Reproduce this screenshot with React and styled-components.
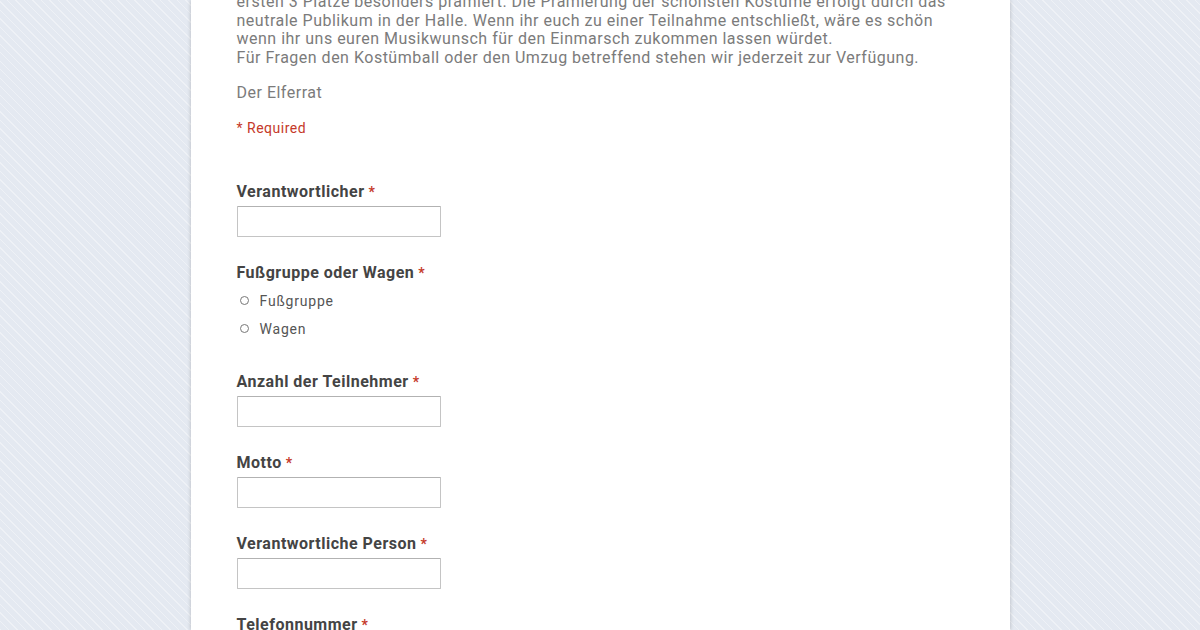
import React from "react";
import styled, { createGlobalStyle } from "styled-components";

const GlobalStyle = createGlobalStyle`
  html, body {
    margin: 0;
    padding: 0;
    height: 100%;
    overflow: hidden;
  }
  body {
    font-family: Roboto, "Liberation Sans", Arial, sans-serif;
    background-color: #e4e9f1;
    background-image: repeating-linear-gradient(
      45deg,
      rgba(255, 255, 255, 0.38) 0px,
      rgba(255, 255, 255, 0.38) 1px,
      transparent 1px,
      transparent 6px
    );
  }
`;

const Page = styled.div`
  height: 630px;
  display: flex;
  justify-content: center;
`;

const Card = styled.main`
  width: 819px;
  background: #fff;
  box-shadow: 0 0 4px rgba(0, 0, 0, 0.22);
  padding: 0 46px;
  box-sizing: border-box;
  overflow: hidden;
`;

const Description = styled.div`
  margin-top: -7px;
  color: #7b7b7b;
  font-size: 16px;
  line-height: 18.5px;
  letter-spacing: 0.5px;
  white-space: nowrap;
`;

const Signature = styled.p`
  margin: 17px 0 0;
  color: #7b7b7b;
  font-size: 16px;
  line-height: 18.5px;
  letter-spacing: 0.5px;
`;

const RequiredNote = styled.p`
  margin: 16px 0 0;
  color: #c53929;
  font-size: 14px;
  line-height: 18px;
  letter-spacing: 0.5px;
`;

const Fields = styled.div`
  margin-top: 45px;
  display: flex;
  flex-direction: column;
  gap: 26px;
`;

const Field = styled.div`
  display: flex;
  flex-direction: column;
  gap: 4px;
`;

const Label = styled.div`
  color: #444;
  font-size: 16px;
  font-weight: 700;
  line-height: 20px;
  letter-spacing: 0.5px;
`;

const Star = styled.span`
  color: #c53929;
  font-size: 14px;
  margin-left: 4px;
`;

const TextInput = styled.input`
  width: 204px;
  height: 31px;
  box-sizing: border-box;
  border: 1px solid #c4c4c4;
  border-top-color: #b2b2b2;
  border-radius: 1px;
  background: #fff;
  margin: 0;
  outline: none;
`;

const RadioList = styled.div`
  display: flex;
  flex-direction: column;
  margin-bottom: 3px;
`;

const RadioRow = styled.label`
  display: flex;
  align-items: center;
  height: 28px;
  gap: 11px;
  padding-left: 3px;
  color: #555;
  font-size: 14px;
  letter-spacing: 0.8px;
`;

const RadioDot = styled.span`
  width: 9px;
  height: 9px;
  border: 1px solid #777;
  border-radius: 50%;
  box-sizing: border-box;
`;

const textFields = [
  "Anzahl der Teilnehmer",
  "Motto",
  "Verantwortliche Person",
  "Telefonnummer",
];

export default function App() {
  return (
    <>
      <GlobalStyle />
      <Page>
        <Card>
          <Description>
            ersten 3 Plätze besonders prämiert. Die Prämierung der schönsten Kostüme erfolgt durch das
            <br />
            neutrale Publikum in der Halle. Wenn ihr euch zu einer Teilnahme entschließt, wäre es schön
            <br />
            wenn ihr uns euren Musikwunsch für den Einmarsch zukommen lassen würdet.
            <br />
            Für Fragen den Kostümball oder den Umzug betreffend stehen wir jederzeit zur Verfügung.
          </Description>
          <Signature>Der Elferrat</Signature>
          <RequiredNote>* Required</RequiredNote>

          <Fields>
            <Field>
              <Label>
                Verantwortlicher<Star>*</Star>
              </Label>
              <TextInput type="text" />
            </Field>

            <Field>
              <Label>
                Fußgruppe oder Wagen<Star>*</Star>
              </Label>
              <RadioList>
                <RadioRow>
                  <RadioDot />
                  Fußgruppe
                </RadioRow>
                <RadioRow>
                  <RadioDot />
                  Wagen
                </RadioRow>
              </RadioList>
            </Field>

            {textFields.map((name) => (
              <Field key={name}>
                <Label>
                  {name}
                  <Star>*</Star>
                </Label>
                <TextInput type="text" />
              </Field>
            ))}
          </Fields>
        </Card>
      </Page>
    </>
  );
}
